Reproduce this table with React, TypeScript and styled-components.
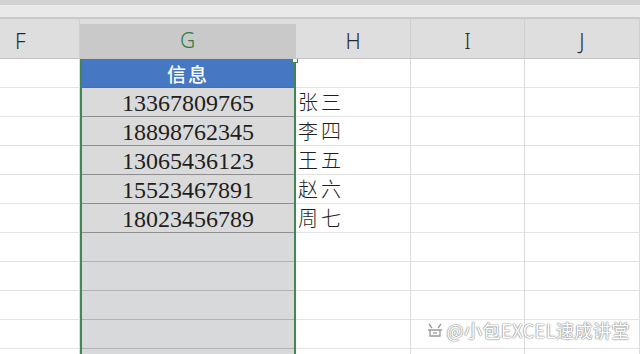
import * as React from 'react';
import styled, { createGlobalStyle } from 'styled-components';

const GlobalStyle = createGlobalStyle`
    html, body {
        margin: 0;
        padding: 0;
        background: #ffffff;
        overflow: hidden;
    }
    body {
        width: 640px;
        height: 354px;
    }
`;

interface Column {
    key: string;
    width: number;
}

const columns: Column[] = [
    { key: 'F', width: 80 },
    { key: 'G', width: 216 },
    { key: 'H', width: 115 },
    { key: 'I', width: 114 },
    { key: 'J', width: 115 },
];

const phones = ['13367809765', '18898762345', '13065436123', '15523467891', '18023456789'];
const names = ['张三', '李四', '王五', '赵六', '周七'];
const ROWS = 11;
const ROW_H = 29;

const Sheet = styled.div`
    width: 640px;
    height: 354px;
    overflow: hidden;
    display: flex;
    flex-direction: column;
    background: #ffffff;
`;

const TopStrip = styled.div`
    height: 5px;
    background: #d2d2d2;
    flex-shrink: 0;
`;

const FormulaBand = styled.div`
    height: 12px;
    background: #e9e9e9;
    border-bottom: 2px solid #c9c9c9;
    flex-shrink: 0;
`;

const HeaderRow = styled.div`
    display: flex;
    height: 39px;
    background: #dedede;
    border-bottom: 1px solid #c4c4c4;
    flex-shrink: 0;
`;

const HeaderCell = styled.div<{ w: number; active: boolean }>`
    width: ${({ w }) => w}px;
    flex-shrink: 0;
    box-sizing: border-box;
    margin-top: ${({ active }) => (active ? '5px' : '0')};
    background: ${({ active }) => (active ? '#c9c9c9' : 'transparent')};
    border-right: 1px solid ${({ active }) => (active ? '#c9c9c9' : '#d0d0d0')};
    display: flex;
    align-items: center;
    justify-content: center;
    padding-bottom: ${({ active }) => (active ? '2px' : '0')};
    padding-top: ${({ active }) => (active ? '0' : '4px')};
    font-family: 'Noto Sans', 'DejaVu Sans', sans-serif;
    font-weight: 300;
    font-size: 21px;
    color: ${({ active }) => (active ? '#2f7d45' : '#2a2a2a')};
`;

const FHeader = styled(HeaderCell)`
    justify-content: flex-start;
    padding-left: 15px;
`;

const Body = styled.div`
    display: flex;
    flex: 1;
    min-height: 0;
    overflow: hidden;
    position: relative;
`;

const Col = styled.div<{ w: number }>`
    width: ${({ w }) => w}px;
    flex-shrink: 0;
    display: flex;
    flex-direction: column;
    box-sizing: border-box;
    border-right: 1px solid #dcdcdc;
`;

const SelectedCol = styled(Col)`
    position: relative;
    background: #d9d9d9;
    border-left: 2px solid #3f8753;
    border-right: 2px solid #3f8753;
`;

const Cell = styled.div`
    height: ${ROW_H}px;
    flex-shrink: 0;
    box-sizing: border-box;
    border-bottom: 1px solid #e3e3e3;
    display: flex;
    align-items: center;
    line-height: 1;
`;

const TitleCell = styled(Cell)`
    background: #4577c2;
    border-bottom: 1px solid #6b6b6b;
    justify-content: center;
    color: #ffffff;
    font-family: 'Noto Sans CJK SC', sans-serif;
    font-weight: 500;
    font-size: 19px;
    letter-spacing: 2px;
`;

const PhoneCell = styled(Cell)<{ filled: boolean }>`
    border-bottom: 1px solid ${({ filled }) => (filled ? '#8e8e8e' : '#b3b3b3')};
    justify-content: center;
    font-family: 'Liberation Serif', 'DejaVu Serif', serif;
    font-size: 24px;
    color: #1e1e1e;
    padding-top: 1px;
    background: ${({ filled }) => (filled ? '#dadada' : '#d8d9db')};
`;

const NameCell = styled(Cell)`
    padding-left: 2px;
    font-family: 'Noto Sans CJK SC', sans-serif;
    font-weight: 300;
    font-size: 20px;
    color: #1f1f1f;
    letter-spacing: 3px;
`;

const FillHandle = styled.div`
    position: absolute;
    right: -4px;
    top: -2px;
    width: 4px;
    height: 4px;
    background: #ffffff;
    border: 1px solid #3f8753;
`;

const Watermark = styled.div`
    position: absolute;
    right: 10px;
    bottom: 15px;
    display: flex;
    align-items: center;
    gap: 3px;
    font-family: 'Noto Sans CJK SC', sans-serif;
    font-size: 18px;
    line-height: 1;
    color: #ffffff;
    text-shadow: 0 0 1px #8a8a8a, 0 0 1px #8a8a8a, 0 0 2px #a0a0a0;
    letter-spacing: 0.5px;
`;

function App() {
    return (
        <Sheet>
            <GlobalStyle />
            <TopStrip />
            <FormulaBand />
            <HeaderRow>
                {columns.map(c =>
                    c.key === 'F' ? (
                        <FHeader key={c.key} w={c.width} active={false}>F</FHeader>
                    ) : (
                        <HeaderCell key={c.key} w={c.width} active={c.key === 'G'}>{c.key}</HeaderCell>
                    )
                )}
            </HeaderRow>
            <Body>
                {columns.map(c => {
                    if (c.key === 'G') {
                        return (
                            <SelectedCol key={c.key} w={c.width}>
                                <FillHandle />
                                <TitleCell>信息</TitleCell>
                                {Array.from({ length: ROWS - 1 }).map((_, i) => (
                                    <PhoneCell key={i} filled={i < phones.length}>{phones[i] || ''}</PhoneCell>
                                ))}
                            </SelectedCol>
                        );
                    }
                    return (
                        <Col key={c.key} w={c.width}>
                            {Array.from({ length: ROWS }).map((_, i) =>
                                c.key === 'H' ? (
                                    <NameCell key={i}>{i > 0 ? names[i - 1] || '' : ''}</NameCell>
                                ) : (
                                    <Cell key={i} />
                                )
                            )}
                        </Col>
                    );
                })}
                <Watermark>
                    <svg width="18" height="18" viewBox="0 0 18 18" fill="none" stroke="#9a9a9a" strokeWidth="1.3">
                        <path d="M3 3 L6 7 M15 3 L12 7 M2 9 H16 M4 9 V15 H14 V9" />
                        <path d="M7 12 H11" />
                    </svg>
                    <span>@小包EXCEL速成讲堂</span>
                </Watermark>
            </Body>
        </Sheet>
    );
}

export default App;
